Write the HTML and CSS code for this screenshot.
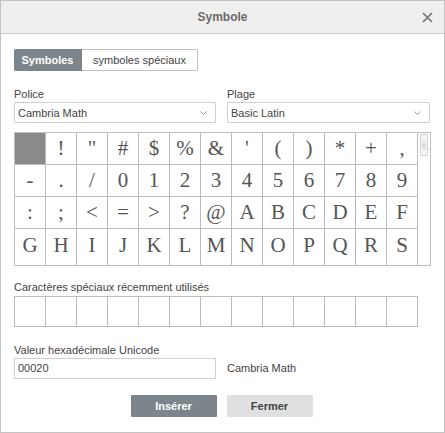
FILE: index.html
```html
<!DOCTYPE html>
<html lang="fr">
<head>
<meta charset="utf-8">
<link rel="stylesheet" href="styles.css">
</head>
<body>
<div class="dialog">
  <div class="header">
    <span class="title">Symbole</span>
    <svg class="close" width="11" height="11" viewBox="0 0 11 11"><path d="M1 1L10 10M10 1L1 10" stroke="#777" stroke-width="1.7" fill="none"/></svg>
  </div>
  <div class="body">
    <div class="tabs">
      <div class="tab active">Symboles</div>
      <div class="tab">symboles spéciaux</div>
    </div>
    <div class="selects">
      <div class="field">
        <div class="label">Police</div>
        <div class="select"><span>Cambria Math</span><svg width="7" height="4" viewBox="0 0 7 4"><path d="M0.5 0.5L3.5 3.5L6.5 0.5" stroke="#999" fill="none"/></svg></div>
      </div>
      <div class="field">
        <div class="label">Plage</div>
        <div class="select"><span>Basic Latin</span><svg width="7" height="4" viewBox="0 0 7 4"><path d="M0.5 0.5L3.5 3.5L6.5 0.5" stroke="#999" fill="none"/></svg></div>
      </div>
    </div>
    <div class="charbox">
      <div class="chars">
        <div class="c sel"></div><div class="c">!</div><div class="c">"</div><div class="c">#</div><div class="c">$</div><div class="c">%</div><div class="c">&amp;</div><div class="c">'</div><div class="c">(</div><div class="c">)</div><div class="c">*</div><div class="c">+</div><div class="c">,</div>
        <div class="c">-</div><div class="c">.</div><div class="c">/</div><div class="c">0</div><div class="c">1</div><div class="c">2</div><div class="c">3</div><div class="c">4</div><div class="c">5</div><div class="c">6</div><div class="c">7</div><div class="c">8</div><div class="c">9</div>
        <div class="c">:</div><div class="c">;</div><div class="c">&lt;</div><div class="c">=</div><div class="c">&gt;</div><div class="c">?</div><div class="c">@</div><div class="c">A</div><div class="c">B</div><div class="c">C</div><div class="c">D</div><div class="c">E</div><div class="c">F</div>
        <div class="c last">G</div><div class="c last">H</div><div class="c last">I</div><div class="c last">J</div><div class="c last">K</div><div class="c last">L</div><div class="c last">M</div><div class="c last">N</div><div class="c last">O</div><div class="c last">P</div><div class="c last">Q</div><div class="c last">R</div><div class="c last">S</div>
      </div>
      <div class="scrollbar"><div class="thumb"></div></div>
    </div>
    <div class="label recent-label">Caractères spéciaux récemment utilisés</div>
    <div class="recent">
      <div></div><div></div><div></div><div></div><div></div><div></div><div></div><div></div><div></div><div></div><div></div><div></div><div></div>
    </div>
    <div class="label hex-label">Valeur hexadécimale Unicode</div>
    <div class="hexrow">
      <div class="input">00020</div>
      <div class="fontname">Cambria Math</div>
    </div>
    <div class="buttons">
      <div class="btn primary">Insérer</div>
      <div class="btn">Fermer</div>
    </div>
  </div>
</div>
</body>
</html>
```
FILE: styles.css
```css
* { box-sizing: border-box; }
html, body { margin: 0; padding: 0; background: #fff; }
body { font-family: "Liberation Sans", Arial, sans-serif; font-size: 11px; color: #444; }
.dialog { width: 445px; height: 433px; border: 1px solid #c3c3c3; background: #fff; }
.header { height: 33px; background: #efefef; border-bottom: 1px solid #cbcbcb; display: flex; align-items: center; justify-content: center; position: relative; }
.title { font-weight: bold; font-size: 12px; color: #6b6b6b; }
.close { position: absolute; right: 11px; top: 11px; }
.body { padding: 15px 13px 0 13px; }
.tabs { display: flex; height: 22px; }
.tab { height: 22px; line-height: 20px; padding: 0 11px; border: 1px solid #c4c4c4; border-left: none; border-radius: 0 2px 2px 0; color: #444; }
.tab.active { background: #7d858c; border-color: #7d858c; color: #fff; font-weight: bold; border-radius: 2px 0 0 2px; width: 68px; padding: 0; text-align: center; }
.selects { display: grid; grid-template-columns: 202px 203px; gap: 11px; margin-top: 16px; }
.label { line-height: 14px; margin-bottom: 1px; color: #444; }
.select { height: 21px; border: 1px solid #cfcfcf; border-radius: 1px; display: flex; align-items: center; justify-content: space-between; padding: 0 8px 0 3px; }
.charbox { margin-top: 9px; width: 417px; height: 134px; border: 1px solid #c0c0c0; display: flex; }
.chars { display: grid; grid-template-columns: repeat(13, 31px); grid-template-rows: 32px 32px 32px 36px; }
.c { border-right: 1px solid #bcbcbc; border-bottom: 1px solid #bcbcbc; display: flex; align-items: center; justify-content: center; font-family: "Liberation Serif", "DejaVu Serif", serif; font-size: 21px; color: #555; padding-bottom: 1px; }
.c.last { border-bottom: none; padding-bottom: 4px; }
.c.sel { background: #8a8a8a; }
.scrollbar { flex: 1; position: relative; }
.thumb { position: absolute; left: 2px; top: 1px; width: 8px; height: 22px; border: 1px solid #d2d2d2; border-radius: 2px; background: #f5f5f5 repeating-linear-gradient(to bottom, transparent 0, transparent 1px, #cfcfcf 1px, #cfcfcf 2px) 1px 6px / 4px 9px no-repeat; }
.recent-label { margin-top: 14px; margin-bottom: 2px; }
.recent { display: grid; grid-template-columns: repeat(13, 31px); height: 31px; border-top: 1px solid #bcbcbc; border-left: 1px solid #bcbcbc; width: 404px; }
.recent div { border-right: 1px solid #bcbcbc; border-bottom: 1px solid #bcbcbc; height: 30px; }
.hex-label { margin-top: 16px; }
.hexrow { display: flex; align-items: center; gap: 11px; }
.input { width: 202px; height: 21px; border: 1px solid #cfcfcf; line-height: 19px; padding-left: 3px; color: #444; }
.fontname { color: #444; margin-top: -2px; }
.buttons { display: flex; justify-content: center; gap: 10px; margin-top: 16px; padding-right: 2px; }
.btn { width: 86px; height: 22px; line-height: 22px; text-align: center; font-weight: bold; background: #dfe0e2; color: #444; border-radius: 1px; }
.btn.primary { background: #7d858c; color: #fff; }
```
